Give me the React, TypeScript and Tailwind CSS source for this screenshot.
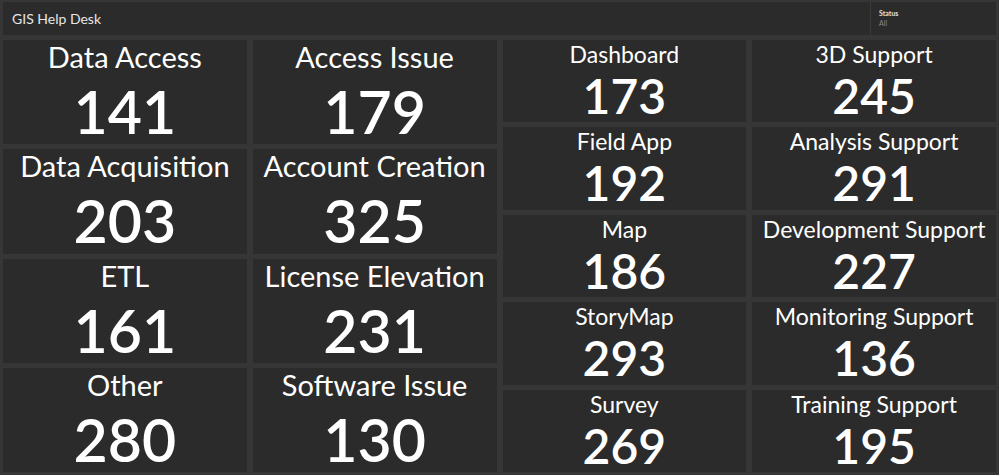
import React from "react";

type Stat = { label: string; value: number };

const left: Stat[] = [
  { label: "Data Access", value: 141 },
  { label: "Access Issue", value: 179 },
  { label: "Data Acquisition", value: 203 },
  { label: "Account Creation", value: 325 },
  { label: "ETL", value: 161 },
  { label: "License Elevation", value: 231 },
  { label: "Other", value: 280 },
  { label: "Software Issue", value: 130 },
];

const right: Stat[] = [
  { label: "Dashboard", value: 173 },
  { label: "3D Support", value: 245 },
  { label: "Field App", value: 192 },
  { label: "Analysis Support", value: 291 },
  { label: "Map", value: 186 },
  { label: "Development Support", value: 227 },
  { label: "StoryMap", value: 293 },
  { label: "Monitoring Support", value: 136 },
  { label: "Survey", value: 269 },
  { label: "Training Support", value: 195 },
];

function BigCard({ s }: { s: Stat }) {
  return (
    <div className="bg-[#2b2b2b] flex flex-col items-center pt-[2px] text-white">
      <div className="text-[29px] leading-[29px] whitespace-nowrap">{s.label}</div>
      <div className="text-[59px] leading-[59px] font-semibold mt-[11px]">{s.value}</div>
    </div>
  );
}

function SmallCard({ s }: { s: Stat }) {
  return (
    <div className="bg-[#2b2b2b] flex flex-col items-center pt-[3px] text-white">
      <div className="text-[23px] leading-[23px] whitespace-nowrap">{s.label}</div>
      <div className="text-[48px] leading-[48px] font-semibold mt-[6px]">{s.value}</div>
    </div>
  );
}

export default function App() {
  return (
    <div
      className="w-[999px] h-[475px] bg-[#363636] p-[3px] pt-[2px] flex flex-col gap-[5px]"
      style={{ fontFamily: "Lato, 'Noto Sans', sans-serif" }}
    >
      <div className="h-[33px] bg-[#2b2b2b] flex shrink-0">
        <div className="flex-1 px-[9px] pt-[8px] text-[14px] leading-[18px] text-[#e6e6e6]">GIS Help Desk</div>
        <div className="w-[126px] border-l border-[#3a3a3a] pl-[8px] pt-[7px] flex flex-col">
          <span className="text-[7px] font-bold text-[#e0e0e0] leading-[9px]">Status</span>
          <span className="text-[7px] text-[#8a8a8a] leading-[9px] mt-[1px]">All</span>
        </div>
      </div>
      <div className="flex-1 grid grid-cols-2 gap-x-[6px]">
        <div className="grid grid-cols-2 grid-rows-4 gap-x-[6px] gap-y-[5px]">
          {left.map((s) => (
            <BigCard key={s.label} s={s} />
          ))}
        </div>
        <div className="grid grid-cols-2 grid-rows-5 gap-x-[6px] gap-y-[5px]">
          {right.map((s) => (
            <SmallCard key={s.label} s={s} />
          ))}
        </div>
      </div>
    </div>
  );
}
